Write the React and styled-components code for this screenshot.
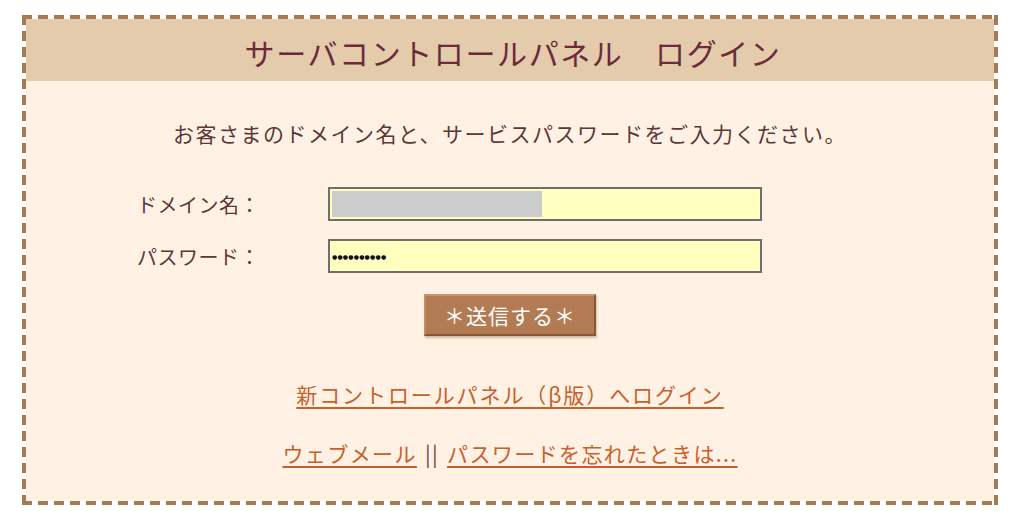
import React from "react";
import styled, { createGlobalStyle } from "styled-components";

const GlobalStyle = createGlobalStyle`
  html, body {
    margin: 0;
    padding: 0;
    background: #ffffff;
  }
  body {
    font-family: "Noto Sans CJK JP", "Noto Sans", sans-serif;
  }
`;

const Page = styled.div`
  width: 1024px;
  height: 522px;
  box-sizing: border-box;
  padding: 15px 26px 17px 22px;
`;

const dash = "#a47b55";

const Frame = styled.div`
  height: 100%;
  box-sizing: border-box;
  padding: 4px;
  background-image:
    repeating-linear-gradient(90deg, ${dash} 0 10px, transparent 10px 16px),
    repeating-linear-gradient(90deg, ${dash} 0 10px, transparent 10px 16px),
    repeating-linear-gradient(180deg, ${dash} 0 10px, transparent 10px 16px),
    repeating-linear-gradient(180deg, ${dash} 0 10px, transparent 10px 16px);
  background-size: 100% 4px, 100% 4px, 4px 100%, 4px 100%;
  background-position: top left, bottom left, top left, top right;
  background-repeat: no-repeat;
`;

const Panel = styled.div`
  height: 100%;
  background: #fff2e4;
  display: flex;
  flex-direction: column;
  align-items: center;
`;

const Header = styled.div`
  width: 100%;
  height: 62px;
  flex-shrink: 0;
  background: #e4cbab;
  display: flex;
  align-items: center;
  justify-content: center;
  color: #6b2b3b;
  font-size: 30px;
  letter-spacing: 1.6px;
  padding: 4px 0 0 6px;
  box-sizing: border-box;
`;

const Lead = styled.p`
  margin: 37px 0 0;
  font-size: 21px;
  line-height: 30px;
  color: #5c3838;
  letter-spacing: 1.5px;
`;

const Form = styled.div`
  margin-top: 39px;
  width: 100%;
  display: flex;
  flex-direction: column;
  gap: 18px;
  padding-left: 111px;
  box-sizing: border-box;
`;

const Row = styled.div`
  display: flex;
  align-items: center;
`;

const Label = styled.span`
  width: 191px;
  font-size: 20px;
  color: #5c3838;
  letter-spacing: 0.5px;
`;

const Field = styled.div`
  width: 434px;
  height: 34px;
  box-sizing: border-box;
  border: 2px solid #6e6e6e;
  background: #ffffc0;
  display: flex;
  align-items: center;
  padding-left: 2px;
`;

const Masked = styled.div`
  width: ${(p) => p.w}px;
  height: 26px;
  background: #cccccc;
`;

const Dots = styled.span`
  font-family: "DejaVu Sans", sans-serif;
  font-size: 6px;
  letter-spacing: 0.2px;
  color: #111;
  font-weight: bold;
`;

const Submit = styled.button`
  margin-top: 21px;
  width: 172px;
  height: 42px;
  background: #b37b54;
  border: 2px solid #8b5633;
  border-top-color: #c7936b;
  border-left-color: #c08a62;
  box-shadow: 1px 2px 2px rgba(120, 80, 50, 0.35);
  color: #ffffff;
  font-family: "Noto Sans CJK JP", "Noto Sans", sans-serif;
  font-size: 21px;
  letter-spacing: 1px;
  padding: 0;
`;

const Links = styled.div`
  margin-top: 43px;
  display: flex;
  flex-direction: column;
  align-items: center;
  gap: 29px;
`;

const LinkLine = styled.div`
  font-size: 21px;
  line-height: 30px;
  color: #5c3838;
  display: flex;
  align-items: center;
  gap: 8px;
  letter-spacing: ${(p) => p.spacing || "1.4px"};
`;

const A = styled.a`
  color: #c8602c;
  text-decoration: underline;
  text-underline-offset: 4px;
  cursor: pointer;
`;

const Sep = styled.span`
  color: #6b4545;
`;

export default function App() {
  return (
    <>
      <GlobalStyle />
      <Page>
        <Frame>
          <Panel>
            <Header>サーバコントロールパネル　ログイン</Header>
            <Lead>お客さまのドメイン名と、サービスパスワードをご入力ください。</Lead>
            <Form>
              <Row>
                <Label>ドメイン名：</Label>
                <Field>
                  <Masked w={210} />
                </Field>
              </Row>
              <Row>
                <Label>パスワード：</Label>
                <Field>
                  <Dots>●●●●●●●●●●</Dots>
                </Field>
              </Row>
            </Form>
            <Submit>＊送信する＊</Submit>
            <Links>
              <LinkLine spacing="1.9px">
                <A>新コントロールパネル（β版）へログイン</A>
              </LinkLine>
              <LinkLine>
                <A>ウェブメール</A>
                <Sep>||</Sep>
                <A>パスワードを忘れたときは...</A>
              </LinkLine>
            </Links>
          </Panel>
        </Frame>
      </Page>
    </>
  );
}
